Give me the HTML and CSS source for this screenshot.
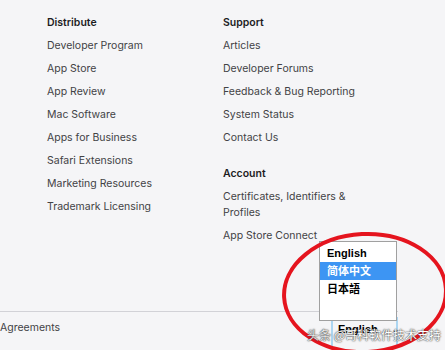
FILE: index.html
```html
<!DOCTYPE html>
<html>
<head>
    <title>Developer Footer</title>
    <meta charset="UTF-8">
    <meta name="viewport" content="width=device-width, initial-scale=1.0">
    <link rel="stylesheet" href="styles.css">
</head>
<body>
    <div class="directory">
        <div class="column">
            <h3>Distribute</h3>
            <ul>
                <li><a href="#">Developer Program</a></li>
                <li><a href="#">App Store</a></li>
                <li><a href="#">App Review</a></li>
                <li><a href="#">Mac Software</a></li>
                <li><a href="#">Apps for Business</a></li>
                <li><a href="#">Safari Extensions</a></li>
                <li><a href="#">Marketing Resources</a></li>
                <li><a href="#">Trademark Licensing</a></li>
            </ul>
        </div>
        <div class="column">
            <h3>Support</h3>
            <ul>
                <li><a href="#">Articles</a></li>
                <li><a href="#">Developer Forums</a></li>
                <li><a href="#">Feedback &amp; Bug Reporting</a></li>
                <li><a href="#">System Status</a></li>
                <li><a href="#">Contact Us</a></li>
            </ul>
            <h3 class="section-gap">Account</h3>
            <ul>
                <li><a href="#">Certificates, Identifiers &amp; Profiles</a></li>
                <li><a href="#">App Store Connect</a></li>
            </ul>
        </div>
    </div>

    <div class="legal">
        <a href="#">Agreements</a>
        <div class="lang-select">
            <span>English</span>
            <span class="chevron">&#8964;</span>
        </div>
    </div>

    <!-- open language list -->
    <ul class="lang-menu">
        <li>English</li>
        <li class="selected">简体中文</li>
        <li>日本語</li>
    </ul>

    <svg class="mark" width="445" height="350" viewBox="0 0 445 350">
        <ellipse cx="365" cy="293" rx="81" ry="59" fill="none" stroke="#e5141e" stroke-width="4" transform="rotate(-3 365 293)"/>
    </svg>

    <div class="watermark"><span class="wm-brand">头条</span> @哥科软件技术支持</div>
</body>
</html>
```

FILE: styles.css
```css
body {
    margin: 0;
    background-color: #f5f5f7;
    font-family: Inter, "Noto Sans", Arial, sans-serif;
    font-size: 10.5px;
    line-height: 16px;
    color: #424245;
    height: 350px;
    overflow: hidden;
    position: relative;
}
a {
    color: #424245;
    text-decoration: none;
}
.directory {
    display: flex;
    gap: 26px;
    padding: 15px 0 0 47px;
    height: 311px;
    box-sizing: border-box;
}
.column {
    width: 150px;
}
h3 {
    margin: 0 0 7px;
    font-size: 10.5px;
    font-weight: 600;
    color: #1d1d1f;
}
.section-gap {
    margin-top: 20px;
}
ul {
    list-style: none;
    margin: 0;
    padding: 0;
}
.column li {
    margin-bottom: 7px;
    max-width: 140px;
}
.legal {
    width: 398px;
    border-top: 1px solid #d2d2d7;
    display: flex;
    justify-content: space-between;
    align-items: flex-start;
    padding-top: 8px;
}
.lang-select {
    display: flex;
    gap: 13px;
    margin-top: -3px;
    padding: 2px 0 10px 5px;
    width: 58px;
    border: 2px solid #acd6f2;
    border-bottom: none;
    font-family: "Liberation Sans", Arial, sans-serif;
    font-size: 11px;
    font-weight: bold;
    color: #000;
}
.chevron {
    font-weight: normal;
    color: #444;
}
.lang-menu {
    position: absolute;
    left: 319px;
    top: 241px;
    width: 76px;
    height: 76px;
    padding-top: 2px;
    box-sizing: content-box;
    background: #fff;
    border: 1px solid #a0a0a0;
    font-family: "Liberation Sans", "Noto Sans CJK SC", Arial, sans-serif;
    font-size: 11px;
    font-weight: bold;
    color: #000;
}
.lang-menu li {
    height: 18px;
    line-height: 18px;
    padding-left: 7px;
}
.lang-menu .selected {
    background-color: #3d95f3;
    color: #fff;
}
.mark {
    position: absolute;
    left: 0;
    top: 0;
    pointer-events: none;
}
.watermark {
    position: absolute;
    left: 307px;
    top: 326px;
    font-family: "Noto Sans CJK SC", sans-serif;
    font-size: 12px;
    line-height: 18px;
    color: #fff;
    text-shadow: 0 0 2px #444, 0 0 1px #222;
    white-space: nowrap;
}
.wm-brand {
    color: #e8e8e8;
}
```
